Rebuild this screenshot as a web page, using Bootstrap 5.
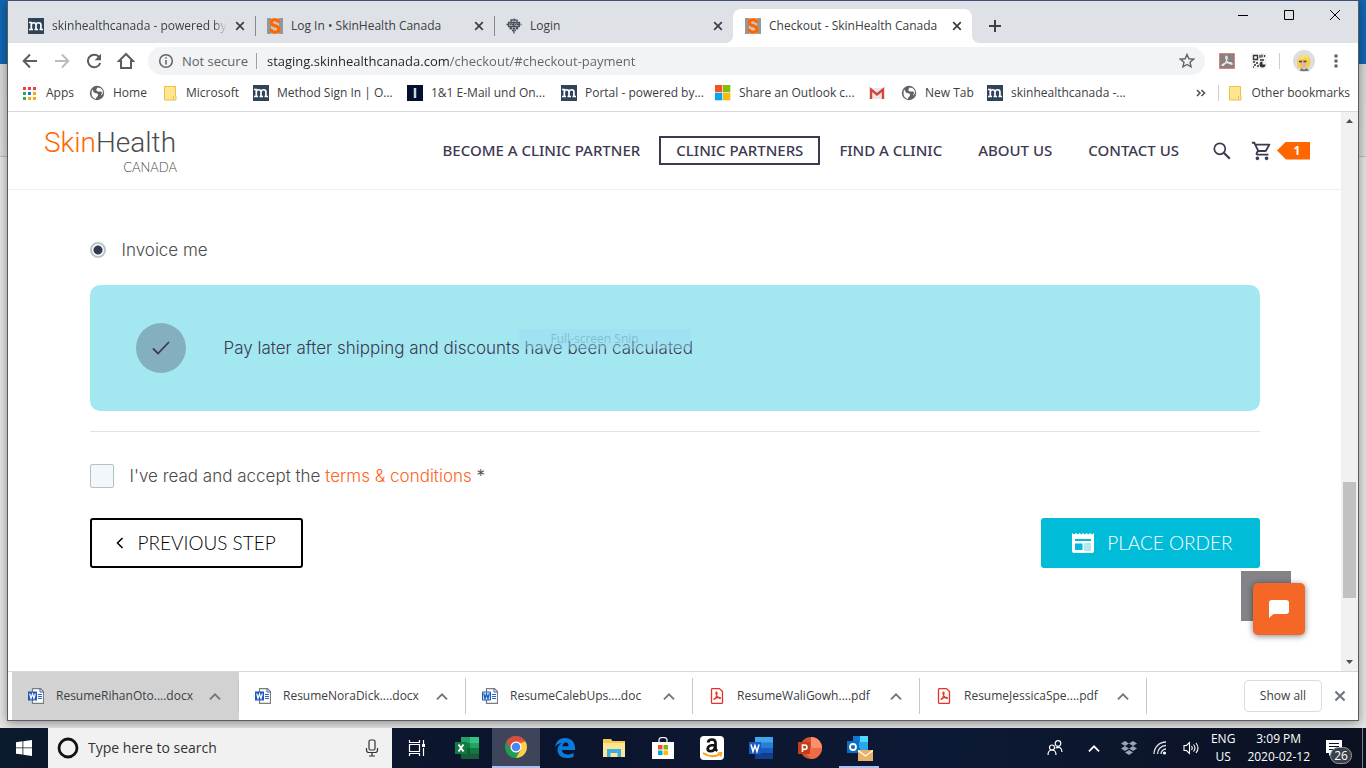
<!DOCTYPE html>
<html lang="en">
<head>
<meta charset="utf-8">
<meta name="viewport" content="width=device-width, initial-scale=1">
<title>Checkout - SkinHealth Canada</title>
<link href="https://cdn.jsdelivr.net/npm/bootstrap@5.3.0/dist/css/bootstrap.min.css" rel="stylesheet">
<style>
  body { font-family: "Open Sans", "Noto Sans", sans-serif; font-size: 12px; line-height: 16px; color: #3c4043; background: #ebebeb; }
  svg { display: block; flex: none; }
  a { color: inherit; text-decoration: none; }
  button { color: inherit; }
  .plain-btn { border: 0; background: none; padding: 0; display: flex; align-items: center; justify-content: center; }
  .clip { overflow: hidden; white-space: nowrap; }

  /* desktop and window frame */
  .desktop { background: linear-gradient(#1067b5 64px, #d8d8d8 64px, #dedede 156px, #bdbdbd 156px, #bdbdbd 157px, #e6e6e6 157px); padding: 0 7px 7px 7px; min-height: 0; }
  .app-window { border: 1px solid #5a5b60; border-top-color: #3f4c7c; background: #fff; box-shadow: 0 2px 10px rgba(0,0,0,.4); min-height: 0; }

  /* tab strip */
  .tab-strip { background: #dee1e6; height: 42px; padding: 8px 0 0 8px; }
  .tab { width: 239px; height: 34px; padding: 0 10px 0 12px; gap: 8px; position: relative; flex: 0 1 239px; min-width: 0; }
  .tab + .tab:not(.current)::before { content: ""; position: absolute; left: 0; top: 7px; width: 1px; height: 20px; background: #85888c; }
  .tab.current { background: #fff; border-radius: 8px 8px 0 0; }
  .tab.current::before, .tab.current::after { content: ""; position: absolute; bottom: 0; width: 8px; height: 8px; }
  .tab.current::before { left: -8px; background: radial-gradient(circle at 0 0, transparent 8px, #fff 8px); }
  .tab.current::after { right: -8px; background: radial-gradient(circle at 100% 0, transparent 8px, #fff 8px); }
  .fade-end { -webkit-mask-image: linear-gradient(90deg, #000 92%, transparent); mask-image: linear-gradient(90deg, #000 92%, transparent); }
  .new-tab { width: 28px; height: 34px; margin-left: 9px; }
  .win-btn { width: 46px; height: 28px; margin-top: -8px; }

  /* toolbar */
  .toolbar { height: 36px; padding: 0 6px; }
  .tool { width: 32px; height: 32px; }
  .omnibox { height: 28px; border-radius: 14px; background: #f1f3f4; margin: 0 6px; padding: 0 10px; font-size: 13px; min-width: 0; }
  .omnibox label { color: #5f6368; }
  .url { border: 0; outline: 0; padding: 0; margin-left: 10px; min-width: 0; color: #202124; -webkit-text-fill-color: transparent; background: linear-gradient(90deg, #202124 183px, #5f6368 183px); -webkit-background-clip: text; background-clip: text; }
  .v-line { width: 1px; height: 16px; background: #9aa0a6; flex: none; }

  /* bookmarks */
  .bookmarks { height: 33px; padding: 0 8px 4px 14px; border-bottom: 1px solid #d5d7da; }
  .bookmark-list { display: grid; grid-template-columns: 67px 73px 91px repeat(4, 154px) 32px 86px 134px; }
  .bookmark-list a, .other-bookmarks { display: flex; align-items: center; gap: 8px; white-space: nowrap; }

  /* web page */
  .web-page { min-width: 0; position: relative; background: #fff; overflow: hidden; }
  .site-header { height: 78px; border-bottom: 1px solid #efefef; padding: 0 31px 0 36px; }
  .logo { width: 133px; }
  .logo-name { font: 300 28px/33px Roboto, sans-serif; color: #4b4b4b; }
  .logo-name span { color: #ff6600; }
  .logo-sub { font: 300 13px/16px "Lato", sans-serif; color: #4b4b4b; text-align: right; }
  .site-nav a { font: 500 15px/25px "Noto Sans", "Open Sans", sans-serif; color: #3c3950; padding: 0 16px; border: 2px solid transparent; white-space: nowrap; }
  .site-nav a.boxed { border-color: #3c3950; padding: 0 15px; margin: 0 1px; }
  .cart-count { width: 33px; height: 18px; background: #ff6600; color: #fff; font: 700 12px/18px "Open Sans", sans-serif; text-align: center; padding-left: 7px; clip-path: polygon(0 50%, 9px 0, 100% 0, 100% 100%, 9px 100%); }
  .checkout { max-width: 1170px; margin: 0 auto; padding-top: 48px; font: 300 17px/24px Inter, sans-serif; color: #4b4b4b; }
  .checkout input { margin: 0; box-shadow: none; flex: none; }
  .pay-radio { width: 16px; height: 16px; appearance: none; border: 2px solid #b8c6ca; border-radius: 50%; background: radial-gradient(circle, #343a50 4px, #fff 5px); }
  .terms-check { width: 24px; height: 24px; appearance: none; border: 1px solid #b2c3c7; border-radius: 2px; background: #f4f7f9; }
  .pay-box { background: #a3e8f0; border-radius: 10px; height: 126px; padding: 0 46px; margin: 23px 0 20px; position: relative; color: #3c3950; }
  .tick { width: 50px; height: 50px; border-radius: 50%; background: #84afbf; flex: none; margin-right: 38px; }
  .snip-ghost { position: absolute; left: 429px; top: 44px; width: 172px; height: 20px; background: rgba(155,220,242,.45); color: rgba(70,120,140,.35); font: 12px/20px "Open Sans", sans-serif; padding-left: 32px; }
  .rule { border-top: 1px solid #dfe3e4; margin-bottom: 32px; }
  .terms a { color: #ff6322; }
  .steps { margin-top: 30px; }
  .step-btn { height: 50px; border-radius: 3px; font: 300 19px/24px Lato, sans-serif; white-space: nowrap; }
  .step-prev { border: 2px solid #000; background: #fff; color: #000; padding: 0 25px 0 22px; gap: 13px; }
  .step-place { border: 0; background: #00bcd8; color: #fff; padding: 0 27px 0 31px; gap: 13px; }
  .corner-block { position: absolute; right: 50px; bottom: 50px; width: 50px; height: 50px; background: #848388; }
  .chat-btn { position: absolute; right: 36px; bottom: 36px; width: 52px; height: 52px; border-radius: 5px; background: #f56726; box-shadow: 0 1px 6px rgba(0,0,0,.5); }
  .scroll-track { width: 17px; background: #f1f1f1; padding: 7px 2px; flex: none; }
  .scroll-thumb { height: 116px; background: #c1c1c1; margin-bottom: 62px; }

  /* downloads */
  .downloads { height: 49px; border-top: 1px solid #d5d7da; padding: 0 12px 0 4px; }
  .download { width: 227px; flex: 0 1 227px; padding: 0 17px 0 16px; position: relative; min-width: 0; }
  .download::after { content: ""; position: absolute; right: 0; top: 6px; bottom: 6px; width: 1px; background: #c6c8ca; }
  .download.pressed { background: #d2d2d2; }
  .show-all { width: 78px; height: 32px; border: 1px solid #dadce0; border-radius: 4px; background: #fff; font-weight: 500; }

  /* taskbar */
  .taskbar { height: 40px; background: linear-gradient(90deg, #0c1a2d, #0b142d 40%, #0d1a35 70%, #0a1020); color: #fff; flex: none; }
  .task { width: 48px; height: 40px; flex: none; }
  .task-list { gap: 1px; }
  .task-view { width: 50px; }
  .task.active-app { background: #3e455a; border-bottom: 2px solid #a9c0f5; }
  .task.open-app { background: linear-gradient(#a9c0f5, #a9c0f5) center bottom / 40px 2px no-repeat; }
  .search-box { width: 344px; background: #f1f1f1; color: #2b2b2b; padding: 0 13px 0 9px; flex: 0 1 344px; }
  .search-box input { border: 0; outline: 0; background: none; font-size: 14px; line-height: 20px; padding: 0; min-width: 0; margin-left: 9px; }
  .search-box input::placeholder { color: #333; opacity: 1; }
  .tray-text { line-height: 18px; text-align: center; white-space: nowrap; }
  .note-count { position: absolute; left: 4px; top: 7px; width: 22px; height: 17px; border-radius: 9px; background: #3b3f47; border: 1px solid #9a9da3; line-height: 15px; text-align: center; }
  .desk-peek { width: 4px; height: 40px; border-left: 1px solid #7a808a; }
</style>
</head>
<body class="vh-100 d-flex flex-column overflow-hidden">

<!-- shared glyphs -->
<svg width="0" height="0" class="position-absolute" aria-hidden="true">
  <symbol id="g-close" viewBox="0 0 10 10"><path d="M1.200 1.200l7.600 7.600M8.800 1.200L1.200 8.800" stroke="currentColor" stroke-width="1.700"/></symbol>
  <symbol id="g-m" viewBox="0 0 16 16"><path d="M0 0h16v16H0z" fill="#2f4459"/><path d="M1 4.500h2.300v7M1 11.500h4M3.300 6.500q1-2 3-1.700 1.700.2 1.700 2v4.700M6.500 11.500H10M8 6.500q1-2 3-1.700 1.900.2 1.900 2v4.700M11.500 11.500H15" fill="none" stroke="#fff" stroke-width="1.700"/></symbol>
  <symbol id="g-s" viewBox="0 0 16 16"><path d="M0 0h16v16H0z" fill="#979797"/><path d="M4 0h8v16H4z" fill="#c9c4c0"/><path d="M11.900 4.600C11.400 2.500 10 1.800 8 1.800 5.700 1.800 4.300 2.900 4.300 4.700c0 4 7.600 2 7.600 6.300 0 2-1.700 3.200-3.900 3.200-2.300 0-4-1-4.200-3.300" fill="none" stroke="#ff6600" stroke-width="3"/></symbol>
  <symbol id="g-globe" viewBox="0 0 16 16"><circle cx="8" cy="8" r="7.200" fill="#5f6368"/><path d="M3 4.500C5 6 4 7.500 6 8s3 0 3 2-2 1.500-2 4C3 13 1.800 10 3 4.500zM8.500 2.500C8 4 6.500 4.500 8 6s4-.5 5 1.500c.8 1.500-1 1-1 3l2-2c.3-3-1.500-6-5.500-6z" fill="#fff"/></symbol>
  <symbol id="g-folder" viewBox="0 0 16 16"><path d="M2.500 1.500h11v9h.5v4.500H2.500z" fill="#ffe58f" stroke="#e8c24a"/><path d="M11.500 11v3.500" stroke="#e8c24a"/></symbol>
  <symbol id="g-up" viewBox="0 0 12 8"><path d="M1.500 6.500L6 2l4.500 4.500" fill="none" stroke="currentColor" stroke-width="1.600"/></symbol>
  <symbol id="g-docx" viewBox="0 0 16 16"><path d="M4.500 4V.700h8l3 3v11.600h-11V12" fill="#fff" stroke="#7d7d7d" stroke-width="1.200"/><path d="M12 .5V4h3.500M10 6.500h4M10 8.500h4M10 10.500h4" stroke="#2a66be" fill="none"/><path d="M0 3.500h9v9H0z" fill="#1b5abe"/><path d="M1.700 5.500L3 10.500 4.500 6 6 10.500l1.300-5" fill="none" stroke="#fff" stroke-width="1.200"/></symbol>
  <symbol id="g-doc" viewBox="0 0 16 16"><path d="M4.500 4V.700h8l3 3v11.600h-11V12" fill="#fff" stroke="#7d7d7d" stroke-width="1.200"/><path d="M12 .5V4h3.500M10 6.500h4M10 8.500h4M10 10.500h4" stroke="#2a66be" fill="none"/><path d="M.5 4h8v8h-8z" fill="#cfe0f7" stroke="#1b5abe"/><path d="M1.700 5.500L3 10.500 4.500 6 6 10.500l1.300-5" fill="none" stroke="#1b5abe" stroke-width="1.300"/></symbol>
  <symbol id="g-pdf" viewBox="0 0 16 16"><path d="M3.500.6h6.900l3.100 3v10.800q0 1-1 1h-9q-1 0-1-1V1.600q0-1 1-1z" fill="#fff" stroke="#e5332a" stroke-width="1.300"/><path d="M5 11.500c0-1.500 6-3 6.500-1.500s-4-1-4.500-4 1.500-2 1 0-2 5.500-3 5.500z" fill="none" stroke="#e5332a" stroke-width="1.100"/></symbol>
</svg>

<div class="desktop flex-fill d-flex">
<div class="app-window flex-fill d-flex flex-column">

  <div class="tab-strip d-flex">
    <div class="tab d-flex align-items-center"><svg width="16" height="16"><use href="#g-m"/></svg><span class="clip fade-end flex-fill">skinhealthcanada - powered by M</span><button class="plain-btn" aria-label="Close tab"><svg width="10" height="10"><use href="#g-close"/></svg></button></div>
    <div class="tab d-flex align-items-center"><svg width="16" height="16"><use href="#g-s"/></svg><span class="clip flex-fill">Log In • SkinHealth Canada</span><button class="plain-btn" aria-label="Close tab"><svg width="10" height="10"><use href="#g-close"/></svg></button></div>
    <div class="tab d-flex align-items-center"><svg width="16" height="16" viewBox="0 0 16 16"><path d="M8 .5v15M4.500 2h7M2 4.500h12M.5 6.500h4M6 6.500h4M11.500 6.500h4M2 8.500h12M3.500 10.500h9M6 12.500h4M5 1.500v10M11 1.500v10M2.500 4v4M13.500 4v4" stroke="#444b55" stroke-width="1.300" stroke-dasharray="2.500 .6"/></svg><span class="clip flex-fill">Login</span><button class="plain-btn" aria-label="Close tab"><svg width="10" height="10"><use href="#g-close"/></svg></button></div>
    <div class="tab current d-flex align-items-center"><svg width="16" height="16"><use href="#g-s"/></svg><span class="clip flex-fill">Checkout - SkinHealth Canada</span><button class="plain-btn" aria-label="Close tab"><svg width="10" height="10"><use href="#g-close"/></svg></button></div>
    <button class="plain-btn new-tab" aria-label="New tab"><svg width="12" height="12" viewBox="0 0 12 12"><path d="M6 0v12M0 6h12" stroke="#3c4043" stroke-width="2"/></svg></button>
    <div class="d-flex ms-auto">
      <button class="plain-btn win-btn" aria-label="Minimize"><svg width="10" height="10" viewBox="0 0 10 10"><path d="M0 5.500h10" stroke="#000"/></svg></button>
      <button class="plain-btn win-btn" aria-label="Maximize"><svg width="10" height="10" viewBox="0 0 10 10"><path d="M.5.5h9v9h-9z" stroke="#000" fill="none"/></svg></button>
      <button class="plain-btn win-btn" aria-label="Close"><svg width="10" height="10" viewBox="0 0 10 10"><path d="M0 0l10 10M10 0L0 10" stroke="#000"/></svg></button>
    </div>
  </div>

  <div class="toolbar d-flex align-items-center">
    <button class="plain-btn tool" aria-label="Back"><svg width="16" height="16" viewBox="0 0 16 16"><path d="M15 8H2M8 1.500L1.700 8 8 14.500" fill="none" stroke="#5a5d61" stroke-width="2"/></svg></button>
    <button class="plain-btn tool" aria-label="Forward"><svg width="16" height="16" viewBox="0 0 16 16"><path d="M1 8h13M8 1.500L14.300 8 8 14.500" fill="none" stroke="#babcbe" stroke-width="2"/></svg></button>
    <button class="plain-btn tool" aria-label="Reload"><svg width="16" height="16" viewBox="0 0 16 16"><path d="M13.300 4.200A6.300 6.300 0 1 0 14.200 10" fill="none" stroke="#5a5d61" stroke-width="2"/><path d="M15 .8v6.400H8.600z" fill="#5a5d61"/></svg></button>
    <button class="plain-btn tool" aria-label="Home"><svg width="18" height="18" viewBox="0 0 18 18"><path d="M9 2L2 9h2v7h10V9h2z" fill="none" stroke="#5a5d61" stroke-width="2"/></svg></button>
    <div class="omnibox flex-fill d-flex align-items-center">
      <svg width="16" height="16" viewBox="0 0 16 16"><circle cx="8" cy="8" r="6.300" fill="none" stroke="#5f6368" stroke-width="1.500"/><path d="M8 7v4.500M8 4.300v1.500" stroke="#5f6368" stroke-width="1.500"/></svg>
      <label for="url" class="ms-2 me-2 text-nowrap">Not secure</label>
      <span class="v-line"></span>
      <input id="url" class="url flex-fill" type="text" value="staging.skinhealthcanada.com/checkout/#checkout-payment">
      <button class="plain-btn" aria-label="Bookmark this page"><svg width="16" height="16" viewBox="0 0 16 16"><path d="M8 1.500l1.900 4.300 4.700.4-3.600 3.100 1.100 4.600L8 11.500l-4.100 2.400L5 9.300 1.400 6.200l4.700-.4z" fill="none" stroke="#5f6368" stroke-width="1.400"/></svg></button>
    </div>
    <button class="plain-btn tool" aria-label="Adobe Acrobat"><svg width="16" height="16" viewBox="0 0 16 16"><path d="M.5.5h15v15H.5z" fill="#898084" stroke="#e3806f"/><path d="M3 12.500c0-2 8.500-4 10-2s-5 0-6-4.500 2-3 1 0-3 7-5 6.500z" fill="none" stroke="#eee" stroke-width="1.100"/></svg></button>
    <button class="plain-btn tool" aria-label="QR code"><svg width="16" height="16" viewBox="0 0 16 16"><rect width="16" height="16" rx="2" fill="#f3f3f3"/><path d="M2.500 2.500h4v4h-4zM9 2v3M11 1.500v3M13.500 2v2M9 7h4M2 9h2M5 10h2M3 12h2M6 13h2M2 14h1" fill="none" stroke="#333" stroke-width="1.300"/><path d="M11.500 8.500v3h3a3 3 0 1 1-3-3z" fill="#333"/></svg></button>
    <span class="v-line mx-1 opacity-50"></span>
    <button class="plain-btn tool ms-1" aria-label="Profile"><svg width="22" height="22" viewBox="0 0 22 22"><circle cx="11" cy="11" r="11" fill="#dcdddf"/><path d="M5 18C3 10 5 5 11 5s8 5 5 12l-4 1z" fill="#f5cf4b"/><path d="M7 10h6v5l-2 4-4-4z" fill="#e8b58c"/><path d="M6 11.500h3M10.500 11.500h3" stroke="#4c453e" stroke-width="1.500"/><path d="M7 21l1-3 3 1.500 3-1.500 2 3z" fill="#777"/><path d="M5 10q5 0 7-3 2 3 4 3l-2-5H8z" fill="#fadf72"/></svg></button>
    <button class="plain-btn tool" aria-label="Menu"><svg width="4" height="16" viewBox="0 0 4 16"><path d="M.5 1.500h3v3h-3zM.5 6.500h3v3h-3zM.5 11.500h3v3h-3z" fill="#5a5d61"/></svg></button>
  </div>

  <div class="bookmarks d-flex align-items-center">
    <nav class="bookmark-list" aria-label="Bookmarks">
      <a href="#"><svg width="16" height="16" viewBox="0 0 16 16"><path d="M1 2h3v3H1zM6 2h3v3H6zM11 2h3v3h-3z" fill="#ea4335"/><path d="M1 7h3v3H1zM1 12h3v3H1z" fill="#34a853"/><path d="M6 7h3v3H6z" fill="#1a73e8"/><path d="M11 7h3v3h-3zM6 12h3v3H6zM11 12h3v3h-3z" fill="#f9ab00"/></svg>Apps</a>
      <a href="#"><svg width="16" height="16"><use href="#g-globe"/></svg>Home</a>
      <a href="#"><svg width="16" height="16"><use href="#g-folder"/></svg>Microsoft</a>
      <a href="#"><svg width="16" height="16"><use href="#g-m"/></svg>Method Sign In | O...</a>
      <a href="#"><svg width="16" height="16" viewBox="0 0 16 16"><path d="M0 0h16v16H0z" fill="#03102e"/><path d="M8 3v10" stroke="#cfd5e0" stroke-width="2.500"/></svg>1&amp;1 E-Mail und On...</a>
      <a href="#"><svg width="16" height="16"><use href="#g-m"/></svg>Portal - powered by...</a>
      <a href="#"><svg width="16" height="16" viewBox="0 0 16 16"><path d="M0 0h7.300v7.300H0z" fill="#f35325"/><path d="M8 0h7.300v7.300H8z" fill="#81bc06"/><path d="M0 8h7.300v7.300H0z" fill="#05a6f0"/><path d="M8 8h7.300v7.300H8z" fill="#ffba08"/></svg>Share an Outlook c...</a>
      <a href="#" aria-label="Gmail"><svg width="16" height="16" viewBox="0 0 16 16"><path d="M1 3h14v11H1z" fill="#e8e8e8"/><path d="M2 14V4.500l6 5 6-5V14" fill="none" stroke="#d6453b" stroke-width="2.400"/></svg></a>
      <a href="#"><svg width="16" height="16"><use href="#g-globe"/></svg>New Tab</a>
      <a href="#"><svg width="16" height="16"><use href="#g-m"/></svg>skinhealthcanada -...</a>
    </nav>
    <button class="plain-btn ms-auto me-2" aria-label="More bookmarks"><svg width="10" height="10" viewBox="0 0 10 10"><path d="M1 2l3 3-3 3M5.500 2l3 3-3 3" fill="none" stroke="#4a4d51" stroke-width="1.500"/></svg></button>
    <span class="v-line opacity-50 me-2 ms-1"></span>
    <a href="#" class="other-bookmarks"><svg width="16" height="16"><use href="#g-folder"/></svg>Other bookmarks</a>
  </div>

  <div class="flex-fill d-flex overflow-hidden">
    <main class="web-page flex-fill">
      <header class="site-header d-flex align-items-center">
        <a href="#" class="logo"><div class="logo-name"><span>Skin</span>Health</div><div class="logo-sub">CANADA</div></a>
        <nav class="site-nav d-flex ms-auto">
          <a href="#">BECOME A CLINIC PARTNER</a>
          <a href="#" class="boxed">CLINIC PARTNERS</a>
          <a href="#">FIND A CLINIC</a>
          <a href="#">ABOUT US</a>
          <a href="#">CONTACT US</a>
        </nav>
        <button class="plain-btn ms-3" aria-label="Search"><svg width="18" height="18" viewBox="0 0 18 18"><circle cx="6.800" cy="6.800" r="5.500" fill="none" stroke="#3c3950" stroke-width="1.700"/><path d="M10.800 10.800l6 6" stroke="#3c3950" stroke-width="2.200"/></svg></button>
        <a href="#" class="d-flex align-items-center ms-3 ps-1"><svg width="22" height="22" viewBox="0 0 24 24"><path fill="#3c3950" d="M15.550 13c.75 0 1.410-.41 1.750-1.030l3.580-6.490A.996.996 0 0 0 20.010 4H5.210l-.94-2H1v2h2l3.600 7.590-1.350 2.440C4.520 15.370 5.480 17 7 17h12v-2H7l1.100-2h7.450zM6.160 6h12.150l-2.760 5H8.530L6.160 6zM7 18c-1.100 0-1.990.9-1.990 2S5.900 22 7 22s2-.9 2-2-.9-2-2-2zm10 0c-1.100 0-1.990.9-1.990 2s.89 2 1.990 2 2-.9 2-2-.9-2-2-2z"/></svg><span class="cart-count ms-1">1</span></a>
      </header>

      <form class="checkout" onsubmit="return false">
        <div class="d-flex align-items-center gap-3">
          <input type="radio" class="pay-radio" id="invoice" name="pay" checked><label for="invoice">Invoice me</label>
        </div>
        <div class="pay-box d-flex align-items-center">
          <span class="tick d-flex align-items-center justify-content-center"><svg width="20" height="16" viewBox="0 0 20 16"><path d="M2 8.500l5 5L18 2" fill="none" stroke="#3c3950" stroke-width="1.800"/></svg></span>
          <span>Pay later after shipping and discounts have been calculated</span>
          <span class="snip-ghost">Full-screen Snip</span>
        </div>
        <div class="rule"></div>
        <div class="d-flex align-items-center terms">
          <input type="checkbox" class="terms-check" id="terms"><label for="terms" class="ms-3">I've read and accept the <a href="#">terms &amp; conditions</a> *</label>
        </div>
        <div class="steps d-flex justify-content-between">
          <button class="step-btn step-prev d-flex align-items-center"><svg width="11" height="12" viewBox="0 0 11 12"><path d="M8.500 1L3.500 6l5 5" fill="none" stroke="#000" stroke-width="1.500"/></svg>PREVIOUS STEP</button>
          <button class="step-btn step-place d-flex align-items-center"><svg width="22" height="20" viewBox="0 0 22 20"><path d="M0 0l2 1.500L4 0l1.700 1.500L7.500 0l1.700 1.500L11 0l1.800 1.500L14.500 0l1.800 1.500L18 0l2 1.500L22 0v18q0 2-2 2H2q-2 0-2-2z" fill="#fff"/><path d="M3 6h16v2H3zM3 10.500h7.500V17H3z" fill="#00bcd8"/><path d="M12 11h7M12 13h7M12 15h7M12 17h7" stroke="#5fd3e4"/></svg>PLACE ORDER</button>
        </div>
      </form>
      <div class="corner-block"></div>
      <button class="plain-btn chat-btn" aria-label="Open chat"><svg width="20" height="18" viewBox="0 0 20 18"><path d="M3 0h14q3 0 3 3v8q0 3-3 3H4.500L0 18V3q0-3 3-3z" fill="#fff"/></svg></button>
    </main>
    <div class="scroll-track d-flex flex-column align-items-stretch" aria-hidden="true">
      <svg class="mx-auto" width="7" height="4" viewBox="0 0 7 4"><path d="M0 4l3.500-4L7 4z" fill="#505050"/></svg>
      <div class="scroll-thumb mt-auto"></div>
      <svg class="mx-auto" width="7" height="4" viewBox="0 0 7 4"><path d="M0 0l3.500 4L7 0z" fill="#505050"/></svg>
    </div>
  </div>

  <div class="downloads d-flex align-items-center">
    <div class="download pressed d-flex align-items-center align-self-stretch"><svg width="16" height="16"><use href="#g-docx"/></svg><span class="clip flex-fill ms-2 ps-1">ResumeRihanOto....docx</span><button class="plain-btn text-secondary" aria-label="Options"><svg width="14" height="9"><use href="#g-up"/></svg></button></div>
    <div class="download d-flex align-items-center align-self-stretch"><svg width="16" height="16"><use href="#g-docx"/></svg><span class="clip flex-fill ms-2 ps-1">ResumeNoraDick....docx</span><button class="plain-btn text-secondary" aria-label="Options"><svg width="14" height="9"><use href="#g-up"/></svg></button></div>
    <div class="download d-flex align-items-center align-self-stretch"><svg width="16" height="16"><use href="#g-doc"/></svg><span class="clip flex-fill ms-2 ps-1">ResumeCalebUps....doc</span><button class="plain-btn text-secondary" aria-label="Options"><svg width="14" height="9"><use href="#g-up"/></svg></button></div>
    <div class="download d-flex align-items-center align-self-stretch"><svg width="16" height="16"><use href="#g-pdf"/></svg><span class="clip flex-fill ms-2 ps-1">ResumeWaliGowh....pdf</span><button class="plain-btn text-secondary" aria-label="Options"><svg width="14" height="9"><use href="#g-up"/></svg></button></div>
    <div class="download d-flex align-items-center align-self-stretch"><svg width="16" height="16"><use href="#g-pdf"/></svg><span class="clip flex-fill ms-2 ps-1">ResumeJessicaSpe....pdf</span><button class="plain-btn text-secondary" aria-label="Options"><svg width="14" height="9"><use href="#g-up"/></svg></button></div>
    <button class="show-all ms-auto p-0">Show all</button>
    <button class="plain-btn ms-2 ps-1 text-secondary" aria-label="Close downloads"><svg width="12" height="12"><use href="#g-close"/></svg></button>
  </div>
</div>
</div>

<footer class="taskbar d-flex align-items-center">
  <button class="plain-btn task" aria-label="Start"><svg width="16" height="16" viewBox="0 0 16 16"><path d="M0 2.300L6.500 1.300v6.200H0zM7.300 1.200L16 0v7.500H7.300zM0 8.300h6.500v6.300L0 13.700zM7.300 8.300H16V16l-8.700-1.200z" fill="#fff"/></svg></button>
  <div class="search-box d-flex align-items-center align-self-stretch">
    <svg width="22" height="22" viewBox="0 0 22 22"><circle cx="11" cy="11" r="9" fill="none" stroke="#111" stroke-width="2.800"/></svg>
    <input type="text" class="flex-fill" placeholder="Type here to search" aria-label="Search">
    <button class="plain-btn" aria-label="Voice search"><svg width="14" height="18" viewBox="0 0 14 18"><rect x="4" y="1" width="6" height="10" rx="1.500" fill="none" stroke="#333" stroke-width="1.200"/><path d="M1.500 9v2q0 2.500 2.500 2.500h6q2.500 0 2.500-2.500V9M7 13.500V17M4 17h6" fill="none" stroke="#333" stroke-width="1.200"/></svg></button>
  </div>
  <div class="task-list d-flex">
  <button class="plain-btn task task-view" aria-label="Task view"><svg width="18" height="18" viewBox="0 0 18 18"><path d="M1.500 1v2.500h10V1M1.500 17v-2.500h10V17M1.500 5.500h10v7h-10z" fill="none" stroke="#fff" stroke-width="1.200"/><path d="M15.500 1v4M15.500 9v8" stroke="#fff" stroke-width="1.200"/><path d="M14 5h3v3h-3z" fill="#fff"/></svg></button>
  <button class="plain-btn task" aria-label="Excel"><svg width="24" height="22" viewBox="0 0 24 22"><path d="M6 0h18v22H6z" fill="#21a366"/><path d="M6 6h9v5H6z" fill="#107c41"/><path d="M15 0h9v6h-9z" fill="#33c481"/><path d="M6 11h18v11H6z" fill="#185c37"/><path d="M15 11h9v5.500h-9z" fill="#107c41"/><path d="M0 5h12v12H0z" fill="#107c41"/><path d="M3.500 7.500l5 7M8.500 7.500l-5 7" stroke="#fff" stroke-width="1.900"/></svg></button>
  <button class="plain-btn task active-app" aria-label="Chrome"><svg width="22" height="22" viewBox="0 0 22 22"><circle cx="11" cy="11" r="11" fill="#1f9d55"/><path d="M11 11L1.500 5.500A11 11 0 0 1 20.500 5.500z" fill="#dd4b3e"/><path d="M1.500 5.500L6.200 13.700 11 6z" fill="#dd4b3e"/><path d="M20.500 5.500A11 11 0 0 1 11 22l4.800-8.200L11 5.500z" fill="#ffcd46"/><path d="M20.500 5.500H11v3z" fill="#dd4b3e"/><circle cx="11" cy="11" r="5.500" fill="#fff"/><circle cx="11" cy="11" r="4.300" fill="#4a86ee"/></svg></button>
  <button class="plain-btn task" aria-label="Edge"><svg width="20" height="20" viewBox="0 0 20 20"><path d="M0 9C1 3 5 0 10 0c6 0 10 4 10 10v2H7c0 3 3 4.500 6 4.500 2 0 4-.6 5.500-1.500v3.700C16.500 19.700 14 20 12 20c-6 0-9.500-3.500-9.500-8 0-3 1.700-5.700 4.500-7C3.500 5.300 1.500 7 0 9zm7.500-.8h6C13.500 5.500 12.500 4.500 10.800 4.500S7.700 6 7.500 8.200z" fill="#0a7bdc"/></svg></button>
  <button class="plain-btn task" aria-label="File Explorer"><svg width="22" height="18" viewBox="0 0 22 18"><path d="M0 0h8l1.500 2H22v16H0z" fill="#f7c84c"/><path d="M0 4h22v14H0z" fill="#ffe694"/><path d="M4 18v-8h14v8h-3.500v-4h-7v4z" fill="#38b0e6"/></svg></button>
  <button class="plain-btn task" aria-label="Store"><svg width="22" height="22" viewBox="0 0 22 22"><path d="M0 5h22v17H0z" fill="#fff"/><path d="M7 5V3q0-2.500 4-2.500T15 3v2" fill="none" stroke="#fff" stroke-width="1.200"/><path d="M6 8h4.500v4.500H6z" fill="#f25022"/><path d="M11.500 8H16v4.500h-4.500z" fill="#7fba00"/><path d="M6 13.500h4.500V18H6z" fill="#00a4ef"/><path d="M11.500 13.500H16V18h-4.500z" fill="#ffb900"/></svg></button>
  <button class="plain-btn task" aria-label="Amazon"><svg width="24" height="24" viewBox="0 0 24 24"><rect width="24" height="24" rx="4" fill="#fff"/><path d="M8 6.500Q8.500 3.500 12 3.500t3.500 3.500v5q0 1.800 1.700 3M15 9q-7.300 0-7.300 3.800 0 2.400 2.600 2.400 4.700 0 4.700-5" fill="none" stroke="#111" stroke-width="2.700"/><path d="M3 17q9 6 17.500 1" fill="none" stroke="#f90" stroke-width="1.800"/><path d="M17.500 17.200l4-.5-.8 3.800" fill="none" stroke="#f90" stroke-width="1.300"/></svg></button>
  <button class="plain-btn task" aria-label="Word"><svg width="24" height="22" viewBox="0 0 24 22"><path d="M6 0h18v6H6z" fill="#41a5ee"/><path d="M6 5.500h18V11H6z" fill="#2b7cd3"/><path d="M6 11h18v5.500H6z" fill="#185abd"/><path d="M6 16.500h18V22H6z" fill="#103f91"/><path d="M0 5h12v12H0z" fill="#185abd"/><path d="M2 7.500l2 7 2-6 2 6 2-7" fill="none" stroke="#fff" stroke-width="1.500"/></svg></button>
  <button class="plain-btn task" aria-label="PowerPoint"><svg width="24" height="22" viewBox="0 0 24 22"><circle cx="13" cy="11" r="11" fill="#d35230"/><path d="M13 0a11 11 0 0 1 11 11H13z" fill="#ff8f6b"/><path d="M2.300 11H24A11 11 0 0 1 13 22z" fill="#ed6c47"/><path d="M0 5h12v12H0z" fill="#c43e1c"/><path d="M4.500 15V8h2q2.500 0 2.500 2.200T6.500 12.300h-2" fill="none" stroke="#fff" stroke-width="1.600"/></svg></button>
  <button class="plain-btn task open-app" aria-label="Outlook"><svg width="28" height="26" viewBox="0 0 28 26"><path d="M8 1h15v14H8z" fill="#0f78d4"/><path d="M15 1h8v6h-8z" fill="#50d9ff"/><path d="M8 7h7v6H8zM15 7h8v8h-8z" fill="#28a8ea"/><path d="M2 6h12v12H2z" fill="#0f6cbd"/><circle cx="8" cy="12" r="3" fill="none" stroke="#fff" stroke-width="1.800"/><path d="M13 15h15v11H13z" fill="#ebb069"/><path d="M13 15.500l7.500 5.500 7.500-5.500" fill="none" stroke="#fff" stroke-width="1.200"/></svg></button>
  </div>

  <div class="d-flex align-items-center ms-auto">
    <button class="plain-btn me-3" aria-label="People"><svg width="16" height="16" viewBox="0 0 16 16"><circle cx="5" cy="7.500" r="2.500" fill="none" stroke="#fff" stroke-width="1.200"/><circle cx="11" cy="3.500" r="2.800" fill="none" stroke="#fff" stroke-width="1.200"/><path d="M1 15q0-5 4-5t4 5M8.500 8q6-2.500 6.500 4" fill="none" stroke="#fff" stroke-width="1.200"/></svg></button>
    <button class="plain-btn me-3 ms-2" aria-label="Show hidden icons"><svg width="14" height="9"><use href="#g-up"/></svg></button>
    <svg class="me-3 ms-1" width="16" height="14" viewBox="0 0 16 14"><path d="M4 0l4 2.500L4 5 0 2.500zM12 0l4 2.500L12 5 8 2.500zM4 5l4 2.500L4 10 0 7.500zM12 5l4 2.500L12 10 8 7.500zM8 9l4 2.500L8 14l-4-2.500z" fill="#9aa3b3"/></svg>
    <svg class="me-3" width="14" height="14" viewBox="0 0 14 14"><path d="M1 13A12 12 0 0 1 13 1M4.500 13A8.500 8.500 0 0 1 13 4.500M8 13a5 5 0 0 1 5-5" fill="none" stroke="#dfe3ea" stroke-width="1.300"/><circle cx="11.500" cy="12" r="1.600" fill="#fff"/></svg>
    <svg class="me-2" width="16" height="14" viewBox="0 0 16 14"><path d="M1 4.500h2.500L6.500 1.500v11l-3-3H1z" fill="none" stroke="#fff" stroke-width="1.100"/><path d="M8.500 5q1.500 2 0 4M10.500 3.500q3 3.500 0 7M13 2q4 5 0 10" fill="none" stroke="#fff" stroke-width="1.100"/></svg>
    <div class="tray-text me-2 ms-1">ENG<br>US</div>
    <div class="tray-text ms-1 me-3">3:09 PM<br>2020-02-12</div>
    <button class="plain-btn position-relative me-3" aria-label="Notifications"><svg width="16" height="16" viewBox="0 0 16 16"><path d="M0 0h16v13H6l-3 3v-3H0z" fill="#fff"/><path d="M3 3.500h10M3 6.500h10M3 9.500h7" stroke="#0a1020" stroke-width="1.200"/></svg><span class="note-count">26</span></button>
    <div class="desk-peek ms-1"></div>
  </div>
</footer>

<script src="https://cdn.jsdelivr.net/npm/bootstrap@5.3.0/dist/js/bootstrap.bundle.min.js"></script>
</body>
</html>
